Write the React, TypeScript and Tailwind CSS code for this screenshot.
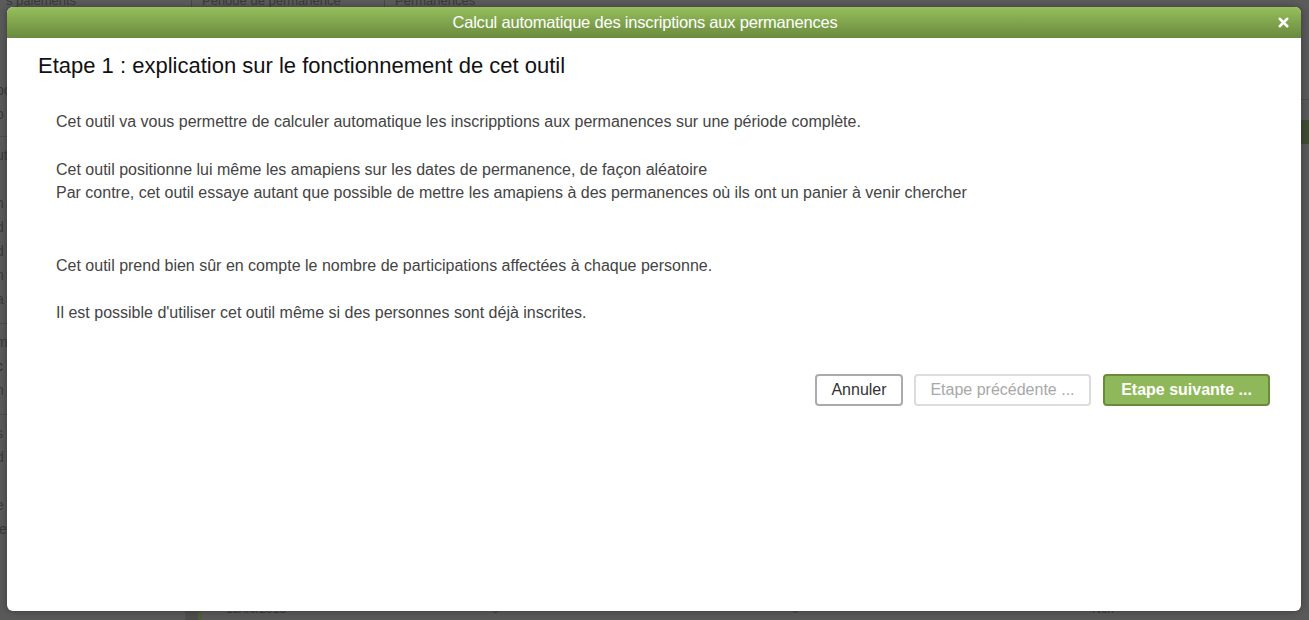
import { X } from 'lucide-react';

const paragraphs = [
  ['Cet outil va vous permettre de calculer automatique les inscripptions aux permanences sur une période complète.'],
  [
    'Cet outil positionne lui même les amapiens sur les dates de permanence, de façon aléatoire',
    'Par contre, cet outil essaye autant que possible de mettre les amapiens à des permanences où ils ont un panier à venir chercher',
  ],
];

export default function App() {
  return (
    <div
      className="relative w-[1309px] h-[620px] overflow-hidden bg-[#595959]"
      style={{ fontFamily: '"Liberation Sans", Arial, sans-serif' }}
    >
      {/* dimmed page behind the dialog */}
      <div className="flex h-[8px] bg-[#5b5b5b] text-[13px] text-[#3a3a3a] leading-none">
        <div className="w-[192px] border-r border-[#4a4a4a] pl-[6px] -mt-[6px]">s paiements</div>
        <div className="w-[193px] border-r border-[#4a4a4a] pl-[10px] -mt-[6px]">Période de permanence</div>
        <div className="pl-[10px] -mt-[6px]">Permanences</div>
      </div>
      <div className="flex h-[612px]">
        <div className="w-[190px] border-r border-[#505050] pt-[70px] text-[14px] text-[#3a3a3a] leading-[24px] -ml-[4px]">
          <div>po</div>
          <div>o</div>
          <div className="mt-[10px] border-t border-[#4d4d4d] pt-[6px]">ut</div>
          <div>t</div>
          <div>h</div>
          <div>d</div>
          <div>d</div>
          <div>n</div>
          <div>a</div>
          <div className="mt-[12px] border-t border-[#4d4d4d] pt-[6px]">m</div>
          <div className="text-[#2e2e2e]">c</div>
          <div>n</div>
          <div className="mt-[12px] border-t border-[#4d4d4d] pt-[6px]">s</div>
          <div>d</div>
          <div className="mt-[24px]">e</div>
          <div>iers</div>
        </div>
        <div className="flex-1 flex flex-col">
          <div className="h-[92px] border-b border-[#4d4d4d]" />
          <div className="h-[24px] bg-[#3f4a33] mt-[20px]" />
          <div className="flex-1" />
          <div className="flex h-[20px] text-[12px] text-[#3a3a3a]">
            <div className="w-[12px] bg-[#4d4d4d]" />
            <div className="w-[4px] bg-[#4f5e3a]" />
            <div className="pl-[24px] w-[290px]">13/06/2015</div>
            <div className="w-[300px]">0</div>
            <div className="w-[300px]">0</div>
            <div>Non</div>
          </div>
        </div>
      </div>

      {/* dialog */}
      <div className="absolute left-[7px] top-[7px] w-[1294px] h-[604px] bg-white rounded-[6px] overflow-hidden flex flex-col shadow-[0_0_6px_rgba(0,0,0,0.35)]">
        <div className="relative h-[31px] shrink-0 bg-gradient-to-b from-[#96bf5c] to-[#6a8a3e] flex items-center justify-center pr-[18px]">
          <span className="text-white text-[16.5px] tracking-[-0.2px]">Calcul automatique des inscriptions aux permanences</span>
          <X className="absolute right-[10px] top-[8px] w-[15px] h-[15px] text-white" strokeWidth={4} />
        </div>

        <div className="flex flex-col px-[31px] pt-[15px]">
          <h1 className="text-[22px] leading-[26px] text-[#111]">Etape 1 : explication sur le fonctionnement de cet outil</h1>

          <div className="pl-[18px] pt-[31px] text-[16px] leading-[23px] text-[#444] flex flex-col">
            {paragraphs.map((lines, i) => (
              <div key={i} className={i === 0 ? 'mb-[25px]' : 'mb-[50px]'}>
                {lines.map(l => <div key={l}>{l}</div>)}
              </div>
            ))}
            <div className="mb-[24px]">Cet outil prend bien sûr en compte le nombre de participations affectées à chaque personne.</div>
            <div>Il est possible d'utiliser cet outil même si des personnes sont déjà inscrites.</div>
          </div>

          <div className="flex justify-end mt-[50px]">
            <button className="h-[32px] w-[88px] rounded-[4px] border-2 border-[#ababab] bg-white text-[16px] text-[#333]">Annuler</button>
            <button className="ml-[11px] h-[32px] w-[177px] rounded-[4px] border-2 border-[#dcdcdc] bg-white text-[16px] text-[#a8a8a8]">Etape précédente ...</button>
            <button className="ml-[12px] h-[32px] w-[167px] rounded-[4px] border-2 border-[#6a8a3e] bg-[#8fb85b] text-[16px] font-bold text-white">Etape suivante ...</button>
          </div>
        </div>
      </div>
    </div>
  );
}
